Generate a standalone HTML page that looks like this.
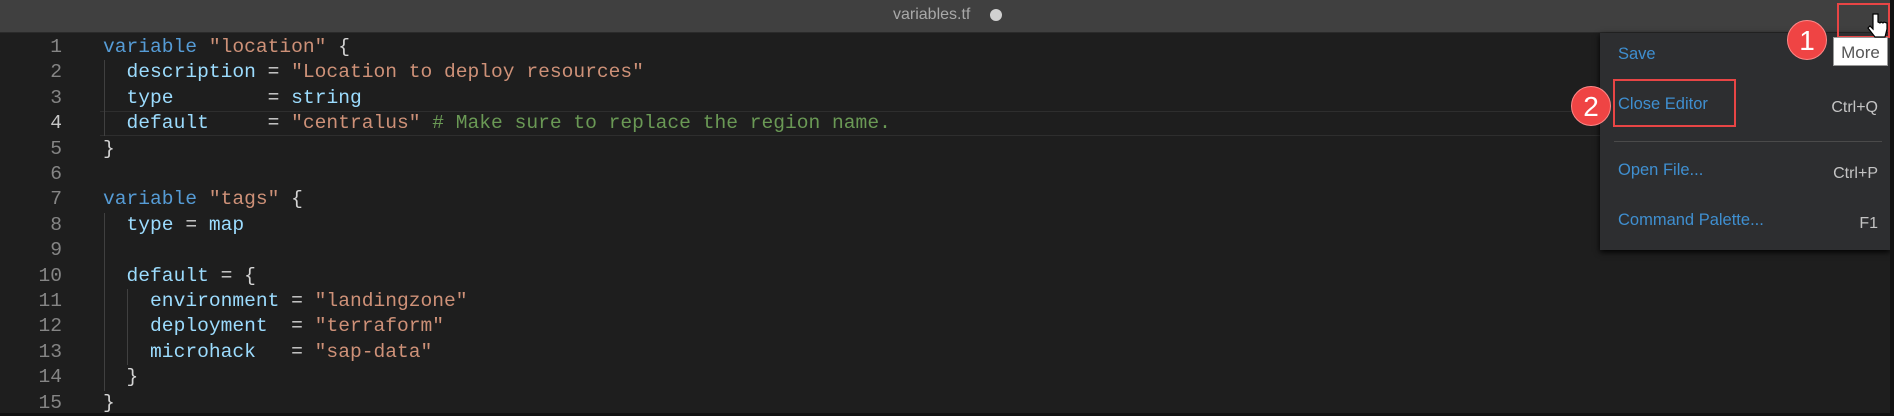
<!DOCTYPE html>
<html><head><meta charset="utf-8"><style>
*{margin:0;padding:0;box-sizing:border-box}
body{width:1894px;height:416px;background:#1e1e1e;position:relative;overflow:hidden;font-family:"Liberation Sans",sans-serif}
.title{position:absolute;left:0;top:0;width:1894px;height:33px;background:#404040;border-bottom:1px solid #2a2a2a}
.title span{position:absolute;left:893px;top:6px;font-size:16px;color:#a8a8a8}
.dot{position:absolute;left:990px;top:9px;width:12px;height:12px;border-radius:50%;background:#d0d0d0}
.code{position:absolute;left:0;top:35px;font-family:"Liberation Mono",monospace;font-size:19.6px}
.ln{position:absolute;left:0;width:62px;text-align:right;color:#858585;height:25.4px;line-height:25.4px}
.l{position:absolute;left:103px;white-space:pre;height:25.4px;line-height:25.4px;color:#d4d4d4}
.k{color:#569cd6}.s{color:#ce9178}.a{color:#9cdcfe}.c{color:#6a9955}
.guide{position:absolute;width:1px;background:#404040}
.hl{position:absolute;left:100px;top:111px;width:1500px;height:25px;border-top:1px solid #2e2e2e;border-bottom:1px solid #2e2e2e}
.menu{position:absolute;left:1600px;top:33px;width:290px;height:217px;background:#2d2e30;box-shadow:0 2px 6px #000}
.mi{position:absolute;left:18px;font-size:16.5px;color:#3f8fd0}
.sc{position:absolute;right:12px;font-size:16px;color:#c4c4c4}
.sep{position:absolute;left:14px;right:8px;top:108px;height:1px;background:#4a4a4a}
.box{position:absolute;border:2px solid #e84545}
.circ{position:absolute;width:40px;height:40px;border-radius:50%;background:#ef4444;color:#fff;font-size:28px;text-align:center;line-height:40px;border:1px solid #f88}
.tip{position:absolute;left:1833px;top:37px;width:55px;height:29px;background:#fff;color:#555;font-size:17px;text-align:center;line-height:29px;border:1px solid #999}
</style></head><body>
<div class="title"><span>variables.tf</span><div class="dot"></div></div>
<div class="hl"></div>
<div class="code">
<div class="ln" style="top:0">1</div>
<div class="ln" style="top:25.4px">2</div>
<div class="ln" style="top:50.8px">3</div>
<div class="ln" style="top:76.2px;color:#c6c6c6">4</div>
<div class="ln" style="top:101.6px">5</div>
<div class="ln" style="top:127px">6</div>
<div class="ln" style="top:152.4px">7</div>
<div class="ln" style="top:177.8px">8</div>
<div class="ln" style="top:203.2px">9</div>
<div class="ln" style="top:228.6px">10</div>
<div class="ln" style="top:254px">11</div>
<div class="ln" style="top:279.4px">12</div>
<div class="ln" style="top:304.8px">13</div>
<div class="ln" style="top:330.2px">14</div>
<div class="ln" style="top:355.6px">15</div>
<div class="guide" style="left:104px;top:25.4px;height:76px"></div>
<div class="guide" style="left:104px;top:177.8px;height:178px"></div>
<div class="guide" style="left:127px;top:254px;height:76px"></div>
<div class="l" style="top:0"><span class="k">variable</span> <span class="s">"location"</span> {</div>
<div class="l" style="top:25.4px">  <span class="a">description</span> = <span class="s">"Location to deploy resources"</span></div>
<div class="l" style="top:50.8px">  <span class="a">type</span>        = <span class="a">string</span></div>
<div class="l" style="top:76.2px">  <span class="a">default</span>     = <span class="s">"centralus"</span> <span class="c"># Make sure to replace the region name.</span></div>
<div class="l" style="top:101.6px">}</div>
<div class="l" style="top:152.4px"><span class="k">variable</span> <span class="s">"tags"</span> {</div>
<div class="l" style="top:177.8px">  <span class="a">type</span> = <span class="a">map</span></div>
<div class="l" style="top:228.6px">  <span class="a">default</span> = {</div>
<div class="l" style="top:254px">    <span class="a">environment</span> = <span class="s">"landingzone"</span></div>
<div class="l" style="top:279.4px">    <span class="a">deployment</span>  = <span class="s">"terraform"</span></div>
<div class="l" style="top:304.8px">    <span class="a">microhack</span>   = <span class="s">"sap-data"</span></div>
<div class="l" style="top:330.2px">  }</div>
<div class="l" style="top:355.6px">}</div>
</div>
<div class="menu">
<div class="mi" style="top:12px">Save</div>
<div class="mi" style="top:62px">Close Editor</div><div class="sc" style="top:66px">Ctrl+Q</div>
<div class="sep"></div>
<div class="mi" style="top:128px">Open File...</div><div class="sc" style="top:132px">Ctrl+P</div>
<div class="mi" style="top:178px">Command Palette...</div><div class="sc" style="top:182px">F1</div>
</div>
<div class="box" style="left:1613px;top:79px;width:123px;height:48px"></div>
<div class="box" style="left:1837px;top:3px;width:53px;height:35px"></div>
<div class="tip">More</div>
<div class="circ" style="left:1571px;top:86px">2</div>
<div class="circ" style="left:1787px;top:20px">1</div>
<svg style="position:absolute;left:1866px;top:12px" width="26" height="32" viewBox="0 0 26 32"><path d="M7 2v15l-3-3-2 2 7 9h10l2-8v-6l-3-1-1 1-2-1-1 1-2-1V2z" fill="#fff" stroke="#000" stroke-width="1.2"/></svg>
<div style="position:absolute;left:1890px;top:0;width:4px;height:416px;background:#111"></div>
<div style="position:absolute;left:0;top:413px;width:1894px;height:3px;background:#111"></div>
</body></html>
